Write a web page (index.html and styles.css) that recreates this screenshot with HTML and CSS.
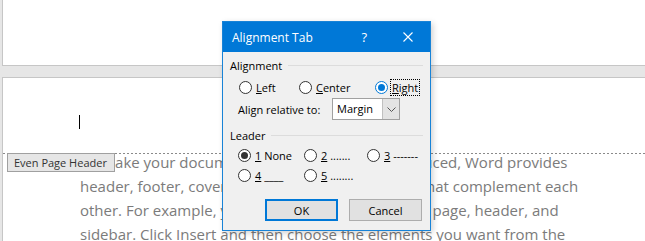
FILE: index.html
```html
<!DOCTYPE html>
<html lang="en">
<head>
  <meta charset="UTF-8">
  <title>Alignment Tab</title>
  <link rel="stylesheet" href="styles.css">
</head>
<body>
  <div class="page page-top"></div>

  <div class="page page-doc">
    <div class="caret"></div>
    <div class="header-line">
      <span class="header-tag">Even Page Header</span>
    </div>
    <div class="doc-text">
      <div>To make your document look professionally produced, Word provides</div>
      <div>header, footer, cover page, and text box designs that complement each</div>
      <div>other. For example, you can add a matching cover page, header, and</div>
      <div>sidebar. Click Insert and then choose the elements you want from the</div>
    </div>
  </div>

  <div class="dialog">
    <div class="titlebar">
      <span class="title">Alignment Tab</span>
      <span class="help">?</span>
      <svg class="close" width="10" height="10" viewBox="0 0 10 10">
        <path d="M0.5 0.5 L9.5 9.5 M9.5 0.5 L0.5 9.5" stroke="#fff" stroke-width="1.1"/>
      </svg>
    </div>

    <div class="dlg-body">
      <div class="group-head"><span>Alignment</span><i></i></div>
      <div class="radios align-row">
        <label class="radio"><span class="dot"></span><u>L</u>eft</label>
        <label class="radio"><span class="dot"></span><u>C</u>enter</label>
        <label class="radio"><span class="dot on focus"></span><span class="focus-box"><u>R</u>ight</span></label>
      </div>
      <div class="relative-row">
        <span>Align relative to:</span>
        <div class="combo">
          <span class="combo-val">Margin</span>
          <span class="combo-btn">
            <svg width="9" height="5" viewBox="0 0 9 5"><path d="M0.5 0.5 L4.5 4.5 L8.5 0.5" fill="none" stroke="#555" stroke-width="1"/></svg>
          </span>
        </div>
      </div>

      <div class="group-head leader-head"><span>Leader</span><i></i></div>
      <div class="radios leader-row">
        <label class="radio"><span class="dot on"></span><u>1</u>&nbsp;None</label>
        <label class="radio"><span class="dot"></span><u>2</u>&nbsp;.......</label>
        <label class="radio"><span class="dot"></span><u>3</u>&nbsp;-------</label>
        <label class="radio"><span class="dot"></span><u>4</u>&nbsp;____</label>
        <label class="radio"><span class="dot"></span><u>5</u>&nbsp;........</label>
      </div>

      <div class="buttons">
        <button class="btn default">OK</button>
        <button class="btn">Cancel</button>
      </div>
    </div>
  </div>
</body>
</html>
```

FILE: styles.css
```css
body {
  margin: 0;
  background: #e6e6e6;
  font-family: "Open Sans", sans-serif;
  overflow: hidden;
}

.page {
  background: white;
  margin-left: 2px;
  border-left: 1px solid #c6c6c6;
}
.page-top {
  height: 65px;
  border-bottom: 1px solid #c6c6c6;
  margin-bottom: 11px;
}
.page-doc {
  height: 163px;
  overflow: hidden;
  border-top: 1px solid #c6c6c6;
}

.caret {
  width: 1px;
  height: 14px;
  background: #000;
  margin: 37px 0 0 76px;
}
.header-line {
  position: relative;
  margin-top: 24px;
  height: 1px;
  background: repeating-linear-gradient(to right, #8a8a8a 0 2px, transparent 2px 4px);
}
.header-tag {
  position: absolute;
  left: 4px;
  top: 0;
  z-index: 1;
  height: 19px;
  line-height: 17px;
  padding: 0 6px;
  box-sizing: border-box;
  width: 108px;
  font-size: 11px;
  color: #333;
  background: #e6e6e6;
  border: 1px solid #a0a0a0;
}
.doc-text {
  margin: -4px 0 0 77px;
  font-size: 15px;
  line-height: 24px;
  color: #7b7b7b;
  white-space: nowrap;
}

/* dialog */
.dialog {
  position: absolute;
  left: 222px;
  top: 21px;
  width: 209px;
  height: 210px;
  box-sizing: border-box;
  border: 1px solid #1883d7;
  background: #f0f0f0;
  box-shadow: 2px 2px 6px rgba(0, 0, 0, 0.18);
  font-size: 11px;
  color: #000;
}
.titlebar {
  height: 30px;
  background: #0078d7;
  color: white;
  display: flex;
  align-items: center;
  padding-left: 9px;
  font-size: 12px;
}
.title { flex: 1; }
.help {
  font-size: 13px;
  margin-right: 36px;
}
.close { margin-right: 17px; }

.dlg-body {
  padding: 5px 7px 0 7px;
}
.group-head {
  display: flex;
  align-items: center;
  height: 16px;
}
.group-head i {
  flex: 1;
  height: 1px;
  background: #dcdcdc;
  margin-left: 6px;
}

.radios {
  display: grid;
  row-gap: 4px;
}
.align-row {
  grid-template-columns: 60px 76px auto;
  margin-top: 6px;
  padding-left: 9px;
}
.leader-row {
  grid-template-columns: 66px 63px auto;
  margin-top: 4px;
  padding-left: 8px;
}
.radio {
  display: flex;
  align-items: center;
  height: 16px;
  white-space: nowrap;
}
.dot {
  width: 13px;
  height: 13px;
  box-sizing: border-box;
  border: 1px solid #333;
  border-radius: 50%;
  background: white;
  margin-right: 4px;
  position: relative;
  flex: none;
}
.dot.on::after {
  content: "";
  position: absolute;
  left: 2px;
  top: 2px;
  width: 7px;
  height: 7px;
  border-radius: 50%;
  background: #333;
}
.dot.focus { border-color: #0078d7; }
.dot.focus::after { background: #0078d7; }
.focus-box {
  outline: 1px dotted #000;
  padding: 0 1px;
  margin-left: -1px;
}

.relative-row {
  display: flex;
  align-items: center;
  margin-top: 3px;
  padding-left: 8px;
}
.relative-row > span { width: 94px; }
.combo {
  display: flex;
  width: 68px;
  height: 22px;
  box-sizing: border-box;
  border: 1px solid #a0a0a0;
  background: white;
}
.combo-val {
  flex: 1;
  padding-left: 4px;
  line-height: 20px;
}
.combo-btn {
  width: 16px;
  background: #e3e3e3;
  border-left: 1px solid #c0c0c0;
  display: flex;
  align-items: center;
  justify-content: center;
}

.leader-head { margin-top: 7px; }

.buttons {
  display: flex;
  justify-content: flex-end;
  gap: 11px;
  margin-top: 16px;
  padding-right: 1px;
}
.btn {
  width: 73px;
  height: 22px;
  font-family: "Open Sans", sans-serif;
  font-size: 11px;
  background: #e1e1e1;
  border: 1px solid #adadad;
  color: #000;
  padding: 0;
}
.btn.default { border: 2px solid #0078d7; }
```
